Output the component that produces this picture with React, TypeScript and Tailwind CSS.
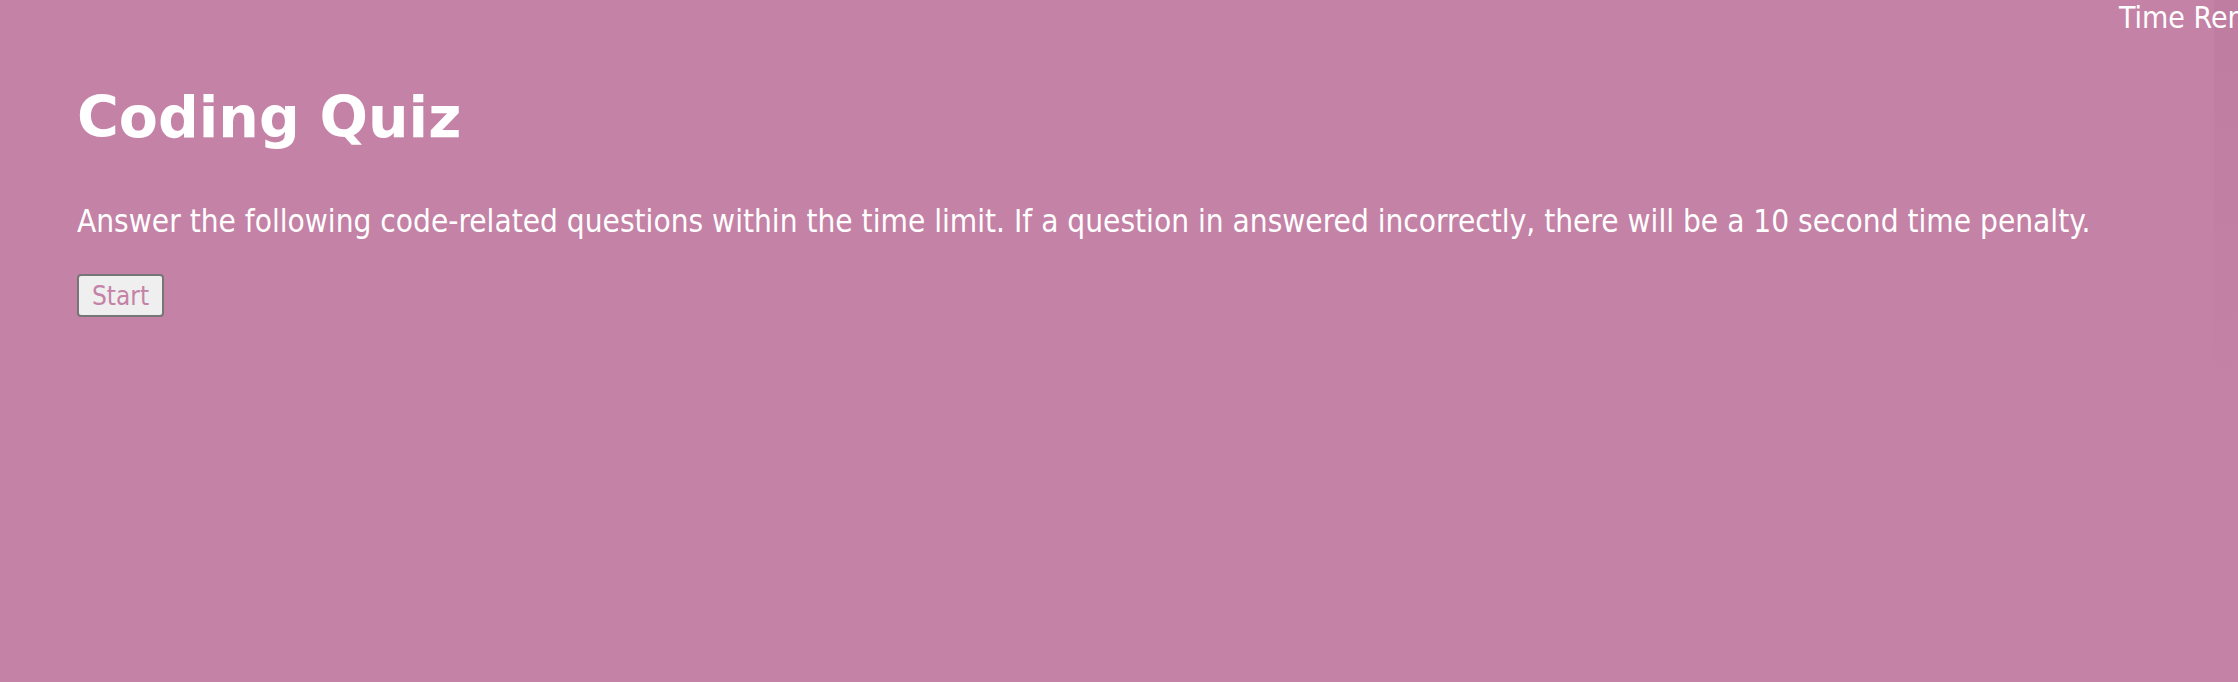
export default function App() {
  return (
    <div className="relative h-[682px] w-full overflow-hidden bg-[#c482a6] text-white [font-family:'DejaVu_Sans_Condensed','DejaVu_Sans',sans-serif]">
      <div className="pointer-events-none absolute right-0 top-0 h-[420px] w-[24px] bg-gradient-to-b from-[#b6769a]/45 to-transparent" />
      {/* timer sits in the top right and runs off the edge */}
      <div className="absolute left-[2119px] top-0 whitespace-nowrap text-[30px] leading-[36px]">
        Time Remaining: 75
      </div>
      <div className="px-[77px] pt-[85px]">
        <h1 className="text-[57px] font-bold leading-[64px] [font-family:'DejaVu_Sans',sans-serif]">Coding Quiz</h1>
        <p className="mt-[52px] text-[31.3px] leading-[40px]">
          Answer the following code-related questions within the time limit. If a question in answered incorrectly, there will be a 10 second time penalty.
        </p>
        <button className="mt-[33px] h-[43px] w-[87px] rounded-[4px] border-2 border-[#767676] bg-[#efefef] text-[26px] leading-none text-[#c482a6]">
          Start
        </button>
      </div>
    </div>
  );
}
